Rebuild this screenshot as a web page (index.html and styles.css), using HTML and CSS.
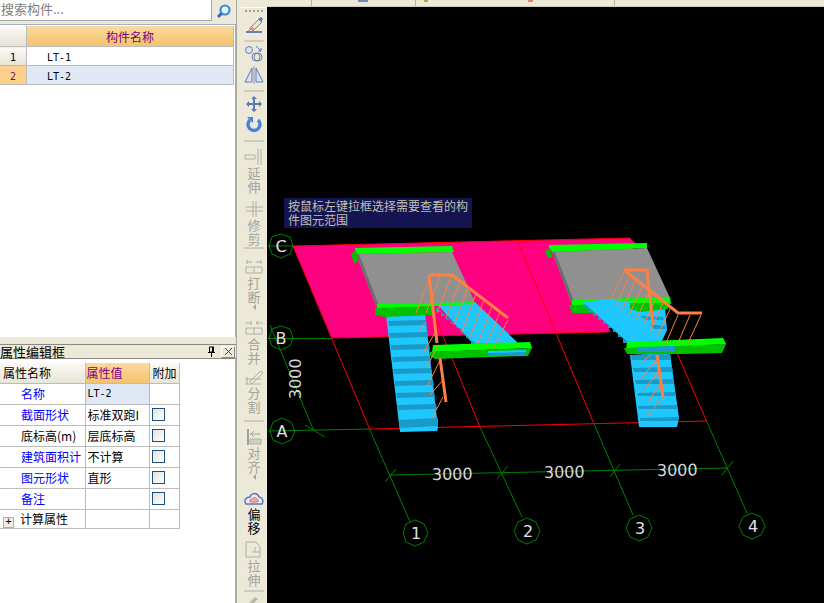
FILE: index.html
```html
<!DOCTYPE html>
<html lang="en">
<head>
    <meta charset="UTF-8">
    <title>构件</title>
    <link rel="stylesheet" href="styles.css">
</head>
<body>
    <div class="left">
        <div class="search">
            <div class="search-input">搜索构件...</div>
            <div class="search-button">
                <svg width="16" height="16" viewBox="0 0 16 16"><circle cx="9" cy="7" r="4.5" fill="#e8f4ff" stroke="#3a8ad8" stroke-width="2.2"/><path d="M5.6 10.4 2 14" stroke="#2a70c0" stroke-width="3"/></svg>
            </div>
        </div>
        <div class="list-panel">
            <table class="list">
                <tr class="list-head"><th class="list-no"></th><th class="list-name">构件名称</th></tr>
                <tr><td class="list-no">1</td><td class="list-value">LT-1</td></tr>
                <tr class="selected"><td class="list-no">2</td><td class="list-value">LT-2</td></tr>
            </table>
        </div>
        <div class="title-bar">
            <span class="title">属性编辑框</span>
            <span class="pin">
                <svg width="9" height="11" viewBox="0 0 9 11"><path d="M2.5 1h4v5h-4zM1 6.5h7M4.5 7v4M5.5 1v5" stroke="#000" fill="none"/></svg>
            </span>
            <span class="close">
                <svg width="9" height="9" viewBox="0 0 9 9"><path d="M1 1l7 7M8 1l-7 7" stroke="#444"/></svg>
            </span>
        </div>
        <div class="props-panel">
            <table class="props">
                <tr class="props-head"><th>属性名称</th><th class="props-value-head">属性值</th><th>附加</th></tr>
                <tr><td class="name"><span class="blue">名称</span></td><td class="value current mono">LT-2</td><td></td></tr>
                <tr><td class="name"><span class="blue">截面形状</span></td><td class="value">标准双跑I</td><td><span class="check"></span></td></tr>
                <tr><td class="name">底标高(m)</td><td class="value">层底标高</td><td><span class="check"></span></td></tr>
                <tr><td class="name"><span class="blue">建筑面积计</span></td><td class="value">不计算</td><td><span class="check"></span></td></tr>
                <tr><td class="name"><span class="blue">图元形状</span></td><td class="value">直形</td><td><span class="check"></span></td></tr>
                <tr><td class="name"><span class="blue">备注</span></td><td class="value"></td><td><span class="check"></span></td></tr>
                <tr class="last"><td class="group"><span class="plus">+</span>计算属性</td><td></td><td></td></tr>
            </table>
        </div>
    </div>

    <div class="toolbar">
        <div class="grip"></div>
        <div class="tool">
            <svg class="icon" viewBox="0 0 22 18"><path d="M3 16h16" stroke="#6a80b0" stroke-width="2"/><path d="M7 12l9-9 3 3-9 9z" fill="#e8e4d0" stroke="#8a8a78"/><path d="M5 15l3-5 4 3z" fill="#d88aa0"/><path d="M15 3l3-2 2 2-2 3z" fill="#5a78b8"/></svg>
        </div>
        <div class="sep"></div>
        <div class="tool">
            <svg class="icon" viewBox="0 0 22 18"><circle cx="6" cy="5" r="3.5" fill="#dce4f0" stroke="#6a80b0"/><circle cx="13" cy="12" r="4" fill="none" stroke="#6a80b0"/><circle cx="15" cy="12" r="4" fill="none" stroke="#6a80b0"/><path d="M13 1l5 5M18 3v3h-3" stroke="#5a78b8" fill="none"/></svg>
        </div>
        <div class="tool">
            <svg class="icon" viewBox="0 0 22 18"><path d="M9 2v14H2zM13 2v14h7z" fill="#dce4f0" stroke="#5a78b8"/><path d="M11 0v18" stroke="#8a98b8"/></svg>
        </div>
        <div class="sep"></div>
        <div class="tool">
            <svg class="icon" viewBox="0 0 22 18"><path d="M11 2v14M4 9h14" stroke="#5a78b8" stroke-width="2"/><path d="M11 1l3 3H8zM11 17l3-3H8zM3 9l3-3v6zM19 9l-3-3v6z" fill="#5a78b8"/></svg>
        </div>
        <div class="tool">
            <svg class="icon" viewBox="0 0 22 18"><path d="M7 4a6 6 0 1 0 8 0" fill="none" stroke="#4a80d8" stroke-width="3.4"/><path d="M4 1h6v6z" fill="#4a80d8"/></svg>
        </div>
        <div class="sep"></div>
        <div class="tool wide">
            <svg class="icon" viewBox="0 0 22 18"><path d="M18 1v16M15 1v16M2 7h10v4H2z" stroke="#b0b0a4" fill="none"/></svg>
            <span class="tool-text">延伸</span>
        </div>
        <div class="tool wide">
            <svg class="icon" viewBox="0 0 22 18"><path d="M13 1v16M10 1v16M3 7h17M3 11h17" stroke="#b0b0a4" fill="none"/></svg>
            <span class="tool-text">修剪</span>
        </div>
        <div class="sep tight"></div>
        <div class="tool wider">
            <svg class="icon" viewBox="0 0 22 18"><path d="M3 9h16v6H3zM11 9v6" stroke="#b0b0a4" fill="none"/><path d="M3 4h6M13 4h6M5 2l-2 2 2 2M17 2l2 2-2 2" stroke="#b0b0a4" fill="none"/></svg>
            <span class="tool-text">打断</span>
        </div>
        <div class="more"></div>
        <div class="tool wider">
            <svg class="icon" viewBox="0 0 22 18"><path d="M3 9h16v6H3zM11 9v6" stroke="#b0b0a4" fill="none"/><path d="M2 4h7M20 4h-7M7 2l2 2-2 2M15 2l-2 2 2 2" stroke="#b0b0a4" fill="none"/></svg>
            <span class="tool-text">合并</span>
        </div>
        <div class="tool">
            <svg class="icon" viewBox="0 0 22 18"><path d="M2 16h16M2 11h16M4 16V9M18 3 7 13l2 3 11-11z" stroke="#b0b0a4" fill="none"/></svg>
            <span class="tool-text">分割</span>
        </div>
        <div class="sep"></div>
        <div class="tool wide">
            <svg class="icon" viewBox="0 0 22 18"><path d="M5 1v16" stroke="#a0a094" stroke-width="2"/><path d="M7 11h11v5H7z" fill="#d0d0c4" stroke="#b0b0a4"/><path d="M7 6h10M11 3 8 6l3 3" stroke="#a0a094" fill="none"/></svg>
            <span class="tool-text">对齐</span>
        </div>
        <div class="more"></div>
        <div class="tool wider">
            <svg class="icon" viewBox="0 0 22 18"><path d="M3 15c-3-4 1-7 4-7 1-4 7-5 9 0 3 0 5 4 3 7z" fill="#e8eef8" stroke="#5a78b8" stroke-width="1.5"/><path d="M7 13c-1-2 1-3 2-3 1-2 4-2 5 0 1 0 2 1 1 3z" fill="#f0a8a0" stroke="#d87870"/></svg>
            <span class="tool-text active">偏移</span>
        </div>
        <div class="tool wide">
            <svg class="icon" viewBox="0 0 22 18"><path d="M3 1h10l4 5v10H3zM12 6v5h5M9 11h3" stroke="#b0b0a4" fill="none"/></svg>
            <span class="tool-text">拉伸</span>
        </div>
        <div class="sep short"></div>
        <div class="tool">
            <svg class="icon" viewBox="0 0 22 18"><path d="M6 8l6-6 3 2-6 6z" fill="#b8b8ac"/></svg>
        </div>
    </div>

    <div class="main">
        <div class="topbar">
            <div class="top-cell first"></div>
            <div class="top-cell second"><i class="frag frag-blue"></i></div>
            <div class="top-cell third"><i class="frag frag-yellow"></i><i class="frag frag-red"></i></div>
            <div class="top-rest"></div>
        </div>
        <div class="canvas">
            <div class="tip">按鼠标左键拉框选择需要查看的构件图元范围</div>
            <svg class="drawing" width="557" height="596" viewBox="267 7 557 596">
                <!-- slab -->
                <polygon points="293,246 630,238 636,244 600,300 610,332 332,338" fill="#ff0080"/>

                <!-- grid -->
                <g fill="none" stroke="#008000">
                    <path d="M268 246H293M268 338.500H332M268 431 370 429"/>
                    <path d="M270 325 313 429M305 425 325 437M370 430 410 522M480 427 522 517M594 424 633 515M707 422 747 513"/>
                    <path d="M390 475 727 468M385 482 396 469M497 479 508 466M610 477 620 464M722 475 733 461"/>
                    <polygon points="281,234 290,237 293,246 290,254 281,258 272,254 269,246 272,237"/>
                    <polygon points="281,326 290,329 293,338 290,346 281,350 272,346 269,338 272,329"/>
                    <polygon points="282,418 291,422 295,431 291,440 282,444 273,440 270,431 273,422"/>
                    <polygon points="415,520 424,524 428,533 424,542 415,546 406,542 403,533 406,524"/>
                    <polygon points="527,518 536,522 540,531 536,540 527,544 518,540 514,531 518,522"/>
                    <polygon points="639,515 648,519 652,528 648,537 639,541 630,537 626,528 630,519"/>
                    <polygon points="752,513 761,517 765,526 761,535 752,539 743,535 739,526 743,517"/>
                </g>
                <g fill="none" stroke="#ff0000">
                    <path d="M293 246 630 238M293 246 370 430M405 243 480 427M518 242 594 424M677 353 707 422"/>
                    <path d="M332 338 608 332M370 429 707 421"/>
                </g>
                <g class="axis">
                    <text x="281" y="252">C</text>
                    <text x="281" y="344">B</text>
                    <text x="282" y="437">A</text>
                    <text x="416" y="539">1</text>
                    <text x="528" y="537">2</text>
                    <text x="640" y="534">3</text>
                    <text x="753" y="532">4</text>
                </g>
                <g class="dim">
                    <text transform="translate(432 480) rotate(-1)">3000</text>
                    <text transform="translate(544 478) rotate(-1)">3000</text>
                    <text transform="translate(657 476) rotate(-1)">3000</text>
                    <text transform="translate(301 399) rotate(-90)">3000</text>
                </g>

                <!-- stair 1 -->
                <polygon points="356,254 452,252 474,300 474,306 376,306" fill="#909090"/>
                <polygon points="356,254 359,254 379,306 376,306" fill="#6e6e6e"/>
                <polygon points="355,248 452,246 454,252 356,254" fill="#00ff00"/>
                <polygon points="351,254 356,250 358,262 354,263" fill="#00c000"/>
                <polygon points="386,315 425,313 438,428 437,431 400,432" fill="#1ec8ff"/>
                <g fill="#1a9ac8">
                    <polygon points="388,321 426,320 427,325 389,326"/>
                    <polygon points="389,333 427,332 428,337 390,338"/>
                    <polygon points="391,345 429,344 430,349 391,350"/>
                    <polygon points="392,357 430,356 431,361 393,362"/>
                    <polygon points="393,369 431,368 432,373 394,374"/>
                    <polygon points="395,381 433,380 434,385 395,386"/>
                    <polygon points="396,393 434,392 435,397 397,398"/>
                    <polygon points="397,405 436,404 437,409 398,410"/>
                    <polygon points="399,420 438,418 438,426 400,428"/>
                </g>
                <polygon points="436,303 475,302 518,343 473,344" fill="#1ec8ff"/>
                <polygon points="436,307 436,312 441,312 441,316 446,316 446,320 451,320 451,324 456,324 456,328 461,328 461,333 466,333 466,338 471,338 471,344 476,344" fill="#1a9ac8"/>
                <polygon points="377,304 433,303 475,302 476,304 377,309" fill="#00ff00"/>
                <polygon points="375,308 433,306 433,315 384,317 375,315" fill="#00c000"/>
                <polygon points="433,345 530,342 532,348 432,352" fill="#00ff00"/>
                <polygon points="430,352 532,348 528,356 490,357 435,359 430,356" fill="#00c000"/>
                <polygon points="488,351 526,350 526,356 488,356" fill="#1ec8ff"/>
                <polygon points="488,353 526,352 526,356 488,356" fill="#1a9ac8"/>
                <g fill="none" stroke="#ff8040" stroke-width="3">
                    <path d="M429 275H452L508 318M429 275 437 343M440 358 446 402"/>
                </g>
                <g fill="none" stroke="#ff8040">
                    <path d="M430 277 416 313M440 277 426 313M451 277 437 313M460 282 446 318M468 288 454 325M476 294 462 331M484 300 470 337M492 306 478 343M500 312 486 345M508 320 494 347"/>
                    <path d="M426 322 419 330M435 333 423 353M437 347 427 367M440 360 427 387M443 380 430 395M443 397 432 418"/>
                </g>

                <!-- stair 2 -->
                <polygon points="552,252 647,248 670,298 670,304 572,304" fill="#909090"/>
                <polygon points="552,252 555,252 575,304 572,304" fill="#6e6e6e"/>
                <polygon points="548,245 647,243 647,248 552,252" fill="#00ff00"/>
                <polygon points="545,251 550,248 552,257 548,258" fill="#00c000"/>
                <polygon points="572,300 670,297 671,304 572,306" fill="#00ff00"/>
                <polygon points="569,305 670,303 668,309 612,313 572,313" fill="#00c000"/>
                <polygon points="583,302 610,299 665,308 667,330 660,345 628,343" fill="#1ec8ff"/>
                <polygon points="583,303 583,308 588,308 588,312 593,312 593,316 598,316 598,320 603,320 603,324 608,324 608,328 613,328 613,332 618,332 618,337 623,337 623,343 629,343" fill="#1a9ac8"/>
                <polygon points="630,303 668,303 668,309 640,312 630,309" fill="#00c000"/>
                <polygon points="640,316 663,317 664,320 646,320" fill="#1a9ac8"/>
                <polygon points="650,324 665,326 666,329 654,329" fill="#1a9ac8"/>
                <polygon points="630,355 670,353 679,418 677,427 639,427" fill="#1ec8ff"/>
                <g fill="#1a9ac8">
                    <polygon points="631,355 670,354 671,360 632,360"/>
                    <polygon points="633,368 672,367 673,372 634,372"/>
                    <polygon points="635,380 673,379 674,384 636,384"/>
                    <polygon points="637,393 675,392 676,396 638,396"/>
                    <polygon points="638,406 677,405 678,409 639,409"/>
                    <polygon points="640,418 679,417 678,421 640,421"/>
                </g>
                <polygon points="627,342 723,338 726,344 626,350" fill="#00ff00"/>
                <polygon points="624,348 726,344 722,353 680,354 627,354" fill="#00c000"/>
                <polygon points="637,347 675,346 675,352 637,352" fill="#1a9ac8"/>
                <g fill="none" stroke="#ff8040" stroke-width="3">
                    <path d="M624 270H647L653 325M624 270 678 313H702M657 355 663 397"/>
                </g>
                <g fill="none" stroke="#ff8040">
                    <path d="M624 272 610 300M630 275 616 305M636 279 622 310M643 285 629 315M650 290 636 320M657 296 643 326M664 301 650 331M671 307 657 337M678 315 666 343M690 315 678 343M701 315 688 343"/>
                    <path d="M651 355 642 362M655 362 642 377M658 372 644 390M662 381 647 404M663 397 648 415"/>
                </g>
            </svg>
        </div>
    </div>
</body>
</html>
```

FILE: styles.css
```css
html, body {
    height: 100%;
    margin: 0;
}

body {
    width: 824px;
    height: 603px;
    overflow: hidden;
    display: flex;
    font-family: "Noto Sans CJK SC", "Liberation Sans", sans-serif;
    font-size: 12px;
    background-color: #ece9d8;
}

/* Left column */
.left {
    width: 236px;
    flex: none;
    display: flex;
    flex-direction: column;
    height: 100%;
}

.search {
    display: flex;
    height: 22px;
    flex: none;
}

.search-input {
    width: 212px;
    height: 21px;
    box-sizing: border-box;
    background-color: #fff;
    border-right: 1px solid #a8a8a0;
    border-bottom: 1px solid #a8a8a0;
    color: #808080;
    font-size: 13px;
    line-height: 17px;
    padding-left: 1px;
    flex: none;
}

.search-button {
    flex: 1;
    display: flex;
    justify-content: center;
    align-items: center;
}

.list-panel {
    margin-top: 2px;
    height: 313px;
    flex: none;
    box-sizing: border-box;
    background-color: #fff;
    border-top: 1px solid #9db2c8;
    border-right: 1px solid #9db2c8;
    padding-top: 1px;
}

table {
    border-collapse: collapse;
    table-layout: fixed;
}

.list {
    width: 234px;
}

.list th, .list td {
    border: 1px solid #bcbcbc;
    border-left: none;
    padding: 0;
    font-weight: normal;
}

.list-head th {
    height: 20px;
    border-top: none;
}

.list tr {
    height: 19px;
}

.list td {
    padding-top: 2px;
    box-sizing: border-box;
}

.list .list-no {
    width: 26px;
    text-align: center;
    background: linear-gradient(#fbfaf6, #e6e3d6);
    font-family: "DejaVu Sans Mono", monospace;
    font-size: 10px;
}

.list .list-name {
    background: linear-gradient(#fad9a0, #f3c36c);
    color: #800080;
    text-align: center;
}

.list-value {
    font-family: "DejaVu Sans Mono", monospace;
    font-size: 10px;
    padding-left: 20px !important;
}

.selected .list-value {
    background-color: #dfe8f4;
}

.list .selected .list-no {
    background: #fdd08c;
    color: #800080;
}

.title-bar {
    margin-top: 7px;
    height: 15px;
    flex: none;
    box-sizing: border-box;
    border-top: 1px solid #8a8a80;
    border-bottom: 1px solid #8a8a80;
    display: flex;
    align-items: center;
    font-size: 13px;
}

.title {
    flex: 1;
    line-height: 13px;
}

.pin {
    width: 14px;
    display: flex;
}

.close {
    width: 14px;
    height: 12px;
    margin-right: 1px;
    box-sizing: border-box;
    border: 1px solid #fff;
    border-right-color: #888;
    border-bottom-color: #888;
    display: flex;
    justify-content: center;
    align-items: center;
}

.props-panel {
    flex: 1;
    background-color: #fff;
    padding-top: 4px;
    border-right: 1px solid #9db2c8;
    margin-top: 0;
}

.props {
    width: 180px;
}

.props th, .props td {
    border: 1px solid #bcbcbc;
    border-left: none;
    padding: 0;
    height: 20px;
    font-weight: normal;
    overflow: hidden;
    white-space: nowrap;
}

.props th {
    border-top: none;
    background: linear-gradient(#faf9f3, #e8e5d8);
    text-align: left;
    padding-left: 3px;
    box-sizing: border-box;
}

.props th:first-child {
    width: 85px;
}

.props th:nth-child(2) {
    width: 64px;
}

.props .props-value-head {
    background: linear-gradient(#fad9a0, #f3c36c);
    color: #800080;
    padding-left: 1px;
}

.props td.name {
    padding-left: 21px;
}

.blue {
    color: #0000ff;
}

.props td.value {
    padding-left: 2px;
}

.current {
    background-color: #dfe8f4;
}

.mono {
    font-family: "DejaVu Sans Mono", monospace;
    font-size: 10px;
}

.check {
    display: block;
    width: 13px;
    height: 13px;
    box-sizing: border-box;
    margin-left: 2px;
    border: 1px solid #1f4f7f;
    background: linear-gradient(135deg, #e4e2da, #fff);
}

.last td {
    height: 17px;
}

.props td.group {
    padding-left: 3px;
}

.plus {
    display: inline-block;
    width: 11px;
    height: 11px;
    box-sizing: border-box;
    margin-right: 6px;
    border: 1px solid #b0b0a8;
    background-color: #f0eee4;
    line-height: 8px;
    text-align: center;
    font-family: "Liberation Mono", monospace;
    font-size: 11px;
    vertical-align: -1px;
}

/* Vertical toolbar */
.toolbar {
    width: 31px;
    flex: none;
    box-sizing: border-box;
    padding-left: 4px;
    border-left: 1px solid #a8a8a0;
    display: flex;
    flex-direction: column;
    align-items: center;
    overflow: hidden;
}

.grip {
    width: 26px;
    height: 9px;
    margin-top: 7px;
    flex: none;
    box-sizing: border-box;
    border-top: 1px solid #fbfaf4;
    background: repeating-linear-gradient(90deg, #a0a094 0 2px, transparent 2px 4px) 4px 2px / 18px 2px no-repeat;
}

.tool {
    display: flex;
    flex-direction: column;
    align-items: center;
    flex: none;
    margin-top: 3px;
}

.grip + .tool {
    margin-top: 0;
}

.wide {
    margin-top: 6px;
}

.wider {
    margin-top: 9px;
}

.icon {
    display: block;
    width: 22px;
    height: 18px;
}

.tool-text {
    display: block;
    width: 13px;
    font-size: 13px;
    line-height: 14px;
    color: #a4a498;
}

.tool-text.active {
    color: #000;
}

.sep {
    width: 20px;
    height: 2px;
    flex: none;
    margin-top: 6px;
    background-color: #cfccbc;
}

.sep.tight {
    margin-top: 1px;
}

.sep.short {
    margin-top: 3px;
}

.more {
    width: 0;
    height: 0;
    flex: none;
    border-top: 3px solid transparent;
    border-bottom: 3px solid transparent;
    border-right: 3px solid #a4a498;
}

/* Main area */
.main {
    flex: 1;
    display: flex;
    flex-direction: column;
}

.topbar {
    height: 7px;
    flex: none;
    display: flex;
    box-sizing: border-box;
    border-bottom: 1px solid #d0ccb8;
}

.top-cell {
    border-right: 1px solid #b8b4a4;
    position: relative;
}

.first {
    width: 44px;
}

.second {
    width: 103px;
}

.third {
    width: 198px;
}

.frag {
    position: absolute;
    top: 0;
    height: 2px;
}

.frag-blue {
    left: 46px;
    width: 10px;
    background-color: #7088b8;
}

.frag-yellow {
    left: 8px;
    width: 4px;
    background-color: #c0a040;
}

.frag-red {
    left: 112px;
    width: 5px;
    background-color: #f08070;
}

.top-rest {
    flex: 1;
}

.canvas {
    flex: 1;
    background-color: #000;
    position: relative;
    overflow: hidden;
}

.drawing {
    display: block;
}

.tip {
    position: absolute;
    left: 17px;
    top: 191px;
    width: 188px;
    height: 30px;
    box-sizing: border-box;
    padding: 1px 2px 0 4px;
    background-color: #141450;
    color: #c0c0b0;
    font-size: 12px;
    line-height: 14px;
}

.axis text {
    fill: #e0e0e0;
    font-family: "DejaVu Sans", sans-serif;
    font-size: 16px;
    text-anchor: middle;
}

.dim text {
    fill: #d8d8d8;
    font-family: "DejaVu Sans", sans-serif;
    font-size: 16px;
}
```
